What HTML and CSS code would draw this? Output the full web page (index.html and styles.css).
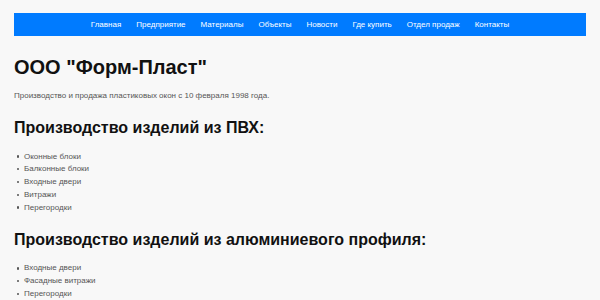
FILE: index.html
```html
<!DOCTYPE html>
<html lang="ru">
<head>
<meta charset="utf-8">
<title>ООО "Форм-Пласт"</title>
<link rel="stylesheet" href="styles.css">
</head>
<body>
<nav class="nav">
  <a href="#">Главная</a>
  <a href="#">Предприятие</a>
  <a href="#">Материалы</a>
  <a href="#">Объекты</a>
  <a href="#">Новости</a>
  <a href="#">Где купить</a>
  <a href="#">Отдел продаж</a>
  <a href="#">Контакты</a>
</nav>
<main class="content">
  <h1 class="title">ООО "Форм-Пласт"</h1>
  <p class="lead">Производство и продажа пластиковых окон с 10 февраля 1998 года.</p>
  <h2 class="section">Производство изделий из ПВХ:</h2>
  <ul class="list">
    <li>Оконные блоки</li>
    <li>Балконные блоки</li>
    <li>Входные двери</li>
    <li>Витражи</li>
    <li>Перегородки</li>
  </ul>
  <h2 class="section">Производство изделий из алюминиевого профиля:</h2>
  <ul class="list">
    <li>Входные двери</li>
    <li>Фасадные витражи</li>
    <li>Перегородки</li>
  </ul>
</main>
</body>
</html>
```
FILE: styles.css
```css
html, body {
  margin: 0;
  padding: 0;
}
body {
  background: #f8f8f8;
  font-family: "Liberation Sans", Arial, sans-serif;
  font-size: 8px;
  color: #555;
  padding: 13px 14px;
}
.nav {
  background: #007bff;
  height: 23px;
  display: flex;
  justify-content: center;
  align-items: center;
}
.nav a {
  color: #fff;
  text-decoration: none;
  padding: 0 7.5px;
  font-size: 8px;
}
.title {
  font-size: 20px;
  color: #111;
  margin: 19px 0 0;
  line-height: 24px;
}
.lead {
  margin: 12px 0 0;
  line-height: 10px;
}
.section {
  font-size: 16px;
  color: #111;
  line-height: 18px;
  margin: 18px 0 0;
}
.list {
  margin: 13.5px 0 0;
  padding-left: 10px;
  list-style: none;
}
.list li {
  line-height: 12.8px;
}
.list li::before {
  content: "";
  display: inline-block;
  width: 2.5px;
  height: 2.5px;
  border-radius: 50%;
  background: #555;
  margin-left: -7.5px;
  margin-right: 5px;
  vertical-align: middle;
}
.list + .section {
  margin-top: 16.5px;
}
```
